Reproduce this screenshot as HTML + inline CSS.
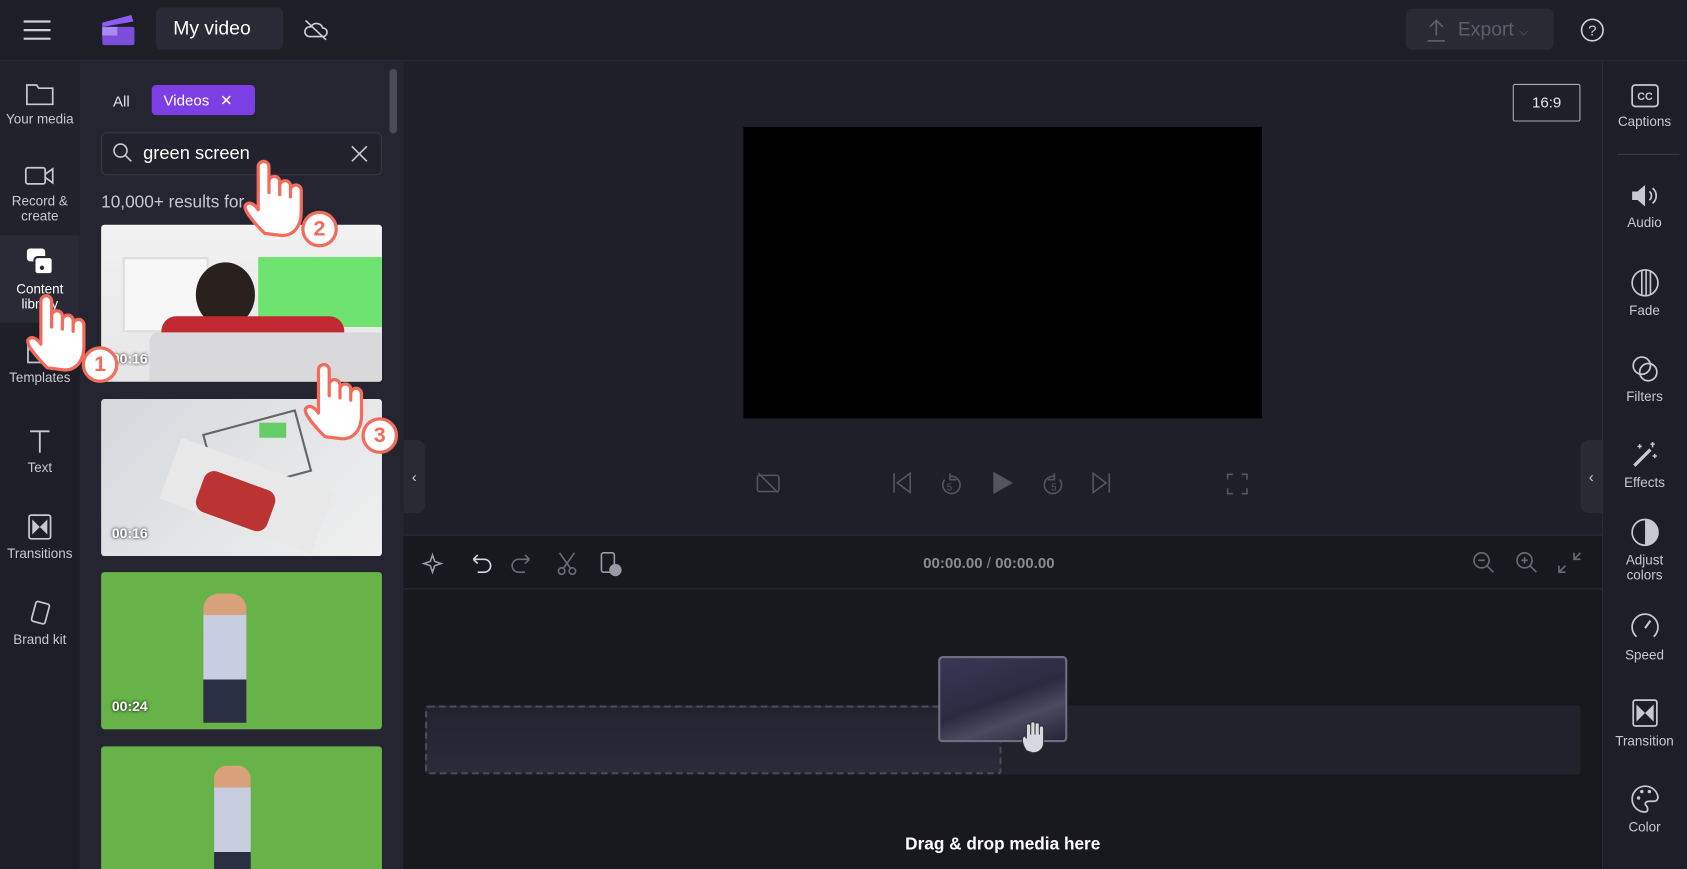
<!DOCTYPE html>
<html><head><meta charset="utf-8"><style>
*{box-sizing:border-box;margin:0;padding:0}
html,body{width:1687px;height:869px;overflow:hidden;background:#1c1c24;font-family:"Liberation Sans",sans-serif}
#w{width:1568px;height:808px;transform:scale(1.0759,1.0755);transform-origin:0 0;position:relative;background:#1f1f29;color:#e6e6ee}
.a{position:absolute}
.top{left:0;top:0;width:1568px;height:57px;background:#1e1e27;border-bottom:1px solid #2c2c38}
.rail{left:0;top:57px;width:74px;height:751px;background:#1e1e27}
.ri{position:absolute;left:0;width:74px;text-align:center;font-size:12.5px;color:#c8c8d2;line-height:14px}
.ri svg{display:block;margin:0 auto 6px}
.panel{left:74px;top:57px;width:301px;height:751px;background:#252531}
.thumb{position:absolute;left:94px;width:261px;height:146px;border-radius:3px;overflow:hidden}
.dur{position:absolute;left:10px;bottom:14px;font-size:13px;font-weight:bold;color:#fff;text-shadow:0 0 3px #000}
.rr{left:1489px;top:57px;width:79px;height:751px;background:#1e1e27;border-left:1px solid #2c2c38}
.rri{position:absolute;left:1489px;width:79px;text-align:center;font-size:12.5px;color:#c8c8d2;line-height:14px}
.rri svg{display:block;margin:0 auto 6px}
svg{overflow:visible}
.hand{position:absolute}
.num{position:absolute;width:34px;height:34px;border-radius:50%;background:#fff;border:3px solid #f26b5b;color:#f26b5b;font-weight:bold;font-size:20px;text-align:center;line-height:28px}
</style></head><body><div id="w">
<div class="a top"></div>
<svg class="a" style="left:22px;top:18px" width="26" height="20"><path d="M0 2H25M0 10H25M0 18H25" stroke="#cfcfd8" stroke-width="2"/></svg>
<svg class="a" style="left:94px;top:13px" width="32" height="30"><path d="M1 8L28 1 30 7 1 12Z" fill="#8b5cf6"/><rect x="1" y="12" width="30" height="17" rx="2" fill="#7c4ddb"/><rect x="1" y="12" width="14" height="8" fill="#a98af5"/></svg>
<div class="a" style="left:145px;top:7px;width:118px;height:39px;background:#2a2a36;border-radius:5px;font-size:18px;line-height:39px;padding-left:16px;color:#fff">My video</div>
<svg class="a" style="left:282px;top:17px" width="24" height="22"><path d="M5 17H18A4 4 0 0 0 18 9 6 6 0 0 0 7 8 4.5 4.5 0 0 0 5 17ZM2 2L21 20" stroke="#cfcfd8" stroke-width="1.5" fill="none"/></svg>
<div class="a" style="left:1307px;top:8px;width:137px;height:38px;background:#2a2a35;border-radius:5px;color:#5d5d6c;font-size:18px;line-height:38px;padding-left:48px">Export <span style="font-size:11px">⌵</span></div>
<svg class="a" style="left:1326px;top:17px" width="18" height="22"><path d="M9 16V2M3 8L9 2 15 8M1 21H17" stroke="#5d5d6c" stroke-width="1.6" fill="none"/></svg>
<svg class="a" style="left:1469px;top:17px" width="22" height="22"><circle cx="11" cy="11" r="10" stroke="#d0d0d8" stroke-width="1.5" fill="none"/><text x="11" y="16" font-size="14" fill="#d0d0d8" text-anchor="middle" font-family="Liberation Sans">?</text></svg>

<div class="a rail"></div>
<div class="a" style="left:0;top:57px;width:74px;height:162px;background:#22222c"></div>
<div class="a" style="left:0;top:219px;width:74px;height:81px;background:#2a2a36"></div>
<div class="ri" style="top:76px"><svg width="26" height="22"><path d="M1 3H10L12 6H25V21H1Z" stroke="#c8c8d2" stroke-width="1.6" fill="none"/></svg>Your media</div>
<div class="ri" style="top:152px"><svg width="28" height="22"><rect x="1" y="4" width="18" height="15" rx="2" stroke="#c8c8d2" stroke-width="1.6" fill="none"/><path d="M19 10L26 5V18L19 13" stroke="#c8c8d2" stroke-width="1.6" fill="none"/></svg>Record &amp;<br>create</div>
<div class="ri" style="top:230px;color:#fff"><svg width="26" height="26"><rect x="1" y="1" width="17" height="12" rx="3" fill="#fff"/><rect x="8" y="9" width="17" height="16" rx="3" fill="#fff" stroke="#2a2a36" stroke-width="2"/><circle cx="15" cy="19" r="2" fill="#2a2a36"/></svg>Content<br>library</div>
<div class="ri" style="top:316px"><svg width="24" height="22"><rect x="1" y="1" width="22" height="20" stroke="#c8c8d2" stroke-width="1.6" fill="none"/><path d="M1 9H23M12 9V21" stroke="#c8c8d2" stroke-width="1.6"/></svg>Templates</div>
<div class="ri" style="top:398px"><svg width="22" height="24"><path d="M2 3H20M11 3V23" stroke="#c8c8d2" stroke-width="1.7"/></svg>Text</div>
<div class="ri" style="top:478px"><svg width="22" height="24"><rect x="1" y="1" width="20" height="22" rx="2" stroke="#c8c8d2" stroke-width="1.6" fill="none"/><path d="M4 5L11 12 4 19ZM18 5L11 12 18 19Z" fill="#c8c8d2"/></svg>Transitions</div>
<div class="ri" style="top:558px"><svg width="22" height="24"><rect x="5" y="2" width="13" height="19" rx="2" transform="rotate(15 11 12)" stroke="#c8c8d2" stroke-width="1.6" fill="none"/></svg>Brand kit</div>

<div class="a panel"></div>
<div class="a" style="left:362px;top:64px;width:7px;height:60px;background:#4a4a58;border-radius:4px"></div>
<div class="a" style="left:105px;top:86px;font-size:14px;color:#e0e0e8">All</div>
<div class="a" style="left:141px;top:79px;width:96px;height:28px;background:#7b3fe4;border-radius:4px;color:#fff;font-size:14px;line-height:28px;padding-left:11px">Videos <span style="margin-left:6px">✕</span></div>
<div class="a" style="left:94px;top:123px;width:261px;height:40px;border:1px solid #393947;border-radius:5px;background:#22222c"></div>
<svg class="a" style="left:105px;top:133px" width="18" height="18"><circle cx="7" cy="7" r="6" stroke="#c8c8d2" stroke-width="1.5" fill="none"/><path d="M11.5 11.5L17 17" stroke="#c8c8d2" stroke-width="1.5"/></svg>
<div class="a" style="left:133px;top:133px;font-size:17px;color:#fff">green screen</div>
<svg class="a" style="left:326px;top:135px" width="16" height="16"><path d="M1 1L15 15M15 1L1 15" stroke="#c8c8d2" stroke-width="1.5"/></svg>
<div class="a" style="left:94px;top:180px;font-size:16px;color:#c8c8d2">10,000+ results for</div>

<div class="thumb" style="top:209px;background:linear-gradient(#f2f2f2,#e6e6e6)">
<div class="a" style="left:146px;top:30px;width:115px;height:65px;background:#6fe36f"></div>
<div class="a" style="left:20px;top:30px;width:80px;height:70px;border:2px solid #ddd;background:#f7f7f7"></div>
<div class="a" style="left:88px;top:35px;width:55px;height:60px;border-radius:50%;background:#2a211e"></div>
<div class="a" style="left:56px;top:85px;width:170px;height:35px;border-radius:14px;background:#c22a33"></div>
<div class="a" style="left:45px;top:100px;width:216px;height:46px;background:#d9d9dc;border-radius:8px 0 0 0"></div>
<div class="dur">00:16</div></div>
<div class="thumb" style="top:371px;background:linear-gradient(135deg,#d4d8dc,#f0f0f0)">
<div class="a" style="left:100px;top:20px;width:90px;height:60px;border:2px solid #666;transform:rotate(-15deg)"></div>
<div class="a" style="left:60px;top:60px;width:150px;height:60px;background:#e8e8e8;transform:rotate(20deg)"></div>
<div class="a" style="left:90px;top:75px;width:70px;height:40px;background:#b33;transform:rotate(20deg);border-radius:10px"></div>
<div class="a" style="left:147px;top:22px;width:25px;height:14px;background:#6c6"></div>
<div class="dur">00:16</div></div>
<div class="thumb" style="top:532px;background:#67b34a">
<div class="a" style="left:95px;top:20px;width:40px;height:120px;background:linear-gradient(#d9a27a 0 20px,#c8cedf 20px 80px,#2a2f44 80px);border-radius:14px 14px 0 0"></div>
<div class="dur">00:24</div></div>
<div class="thumb" style="top:694px;height:114px;border-radius:3px 3px 0 0;background:#67b34a">
<div class="a" style="left:105px;top:18px;width:34px;height:96px;background:linear-gradient(#d9a27a 0 20px,#c8cedf 20px 80px,#2a2f44 80px);border-radius:12px 12px 0 0"></div></div>

<!-- preview -->
<div class="a" style="left:1406px;top:78px;width:63px;height:35px;border:1px solid #aaaab4;border-radius:2px;font-size:14px;line-height:33px;text-align:center;color:#e6e6ee">16:9</div>
<div class="a" style="left:691px;top:118px;width:482px;height:271px;background:#000"></div>
<div class="a" style="left:375px;top:409px;width:20px;height:68px;background:#2a2a35;border-radius:0 8px 8px 0;color:#c8c8d2;font-size:14px;line-height:68px;text-align:center">‹</div>
<div class="a" style="left:1469px;top:409px;width:20px;height:68px;background:#2a2a35;border-radius:8px 0 0 8px;color:#c8c8d2;font-size:14px;line-height:68px;text-align:center">‹</div>
<svg class="a" style="left:703px;top:439px" width="22" height="20"><rect x="1" y="3" width="20" height="15" rx="2" stroke="#55555f" stroke-width="1.5" fill="none"/><path d="M2 1L20 19" stroke="#55555f" stroke-width="1.5"/></svg>
<svg class="a" style="left:828px;top:438px" width="200" height="24" fill="none" stroke="#55555f" stroke-width="1.5"><path d="M3 2V20M18 2L6 11 18 20Z"/><path d="M55 5A8 8 0 1 1 50 8M55 2V8H61"/><text x="52" y="18" font-size="9" fill="#55555f" stroke="none">5</text><path d="M96 2L112 11 96 20Z" fill="#55555f"/><path d="M152 5A8 8 0 1 0 157 8M152 2V8H146"/><text x="149" y="18" font-size="9" fill="#55555f" stroke="none">5</text><path d="M188 2L200 11 188 20ZM203 2V20"/></svg>
<svg class="a" style="left:1140px;top:440px" width="20" height="20" fill="none" stroke="#55555f" stroke-width="1.5"><path d="M1 6V1H6M14 1H19V6M19 14V19H14M6 19H1V14"/></svg>

<!-- timeline -->
<div class="a" style="left:375px;top:497px;width:1114px;height:311px;background:#18181f;border-top:1px solid #2c2c38"></div>
<div class="a" style="left:375px;top:547px;width:1114px;height:1px;background:#2c2c38"></div>
<svg class="a" style="left:394px;top:512px" width="190" height="24" fill="none" stroke="#9a9aa6" stroke-width="1.5"><path d="M8 4L10 10 16 12 10 14 8 20 6 14 0 12 6 10Z"/><path d="M46 8H56A6 6 0 0 1 56 20H50M46 8L50 4M46 8L50 12" stroke="#d8d8e0"/><path d="M98 8H88A6 6 0 0 0 88 20H94M98 8L94 4M98 8L94 12" stroke="#6a6a74"/><path d="M126 2L136 16M140 2L130 16" stroke="#6a6a74"/><circle cx="128" cy="19" r="3" stroke="#6a6a74"/><circle cx="138" cy="19" r="3" stroke="#6a6a74"/><rect x="165" y="2" width="12" height="18" rx="2"/><circle cx="178" cy="18" r="5" fill="#9a9aa6"/></svg>
<div class="a" style="left:858px;top:515px;font-size:14px;font-weight:bold;color:#8a8a96">00:00.00 <span style="font-weight:normal">/</span> 00:00.00</div>
<svg class="a" style="left:1369px;top:512px" width="102" height="24" fill="none" stroke="#6a6a74" stroke-width="1.5"><circle cx="8" cy="9" r="7"/><path d="M13 14L19 20M5 9H11"/><circle cx="48" cy="9" r="7"/><path d="M53 14L59 20M45 9H51M48 6V12"/><path d="M80 20L86 14M80 14V20H86M100 2L94 8M94 2V8H100"/></svg>

<div class="a" style="left:395px;top:656px;width:1074px;height:64px;background:#22222c;border-radius:3px"></div>
<div class="a" style="left:395px;top:656px;width:536px;height:64px;border:2px dashed #4a4a58;border-radius:3px;background:linear-gradient(to top,#2c2b3a,#232230)"></div>
<div class="a" style="left:872px;top:610px;width:120px;height:80px;border:2px solid #6e6e80;border-radius:4px;background:linear-gradient(160deg,#3a3858,#2a2a40 50%,#4a4a60 70%,#23233a)"></div>
<svg class="a" style="left:948px;top:670px" width="28" height="32"><path d="M6 28C2 22 1 16 4 14L6 16V5A2 2 0 0 1 10 5V13V3A2 2 0 0 1 14 3V13V4A2 2 0 0 1 18 4V13V7A2 2 0 0 1 22 7V20C22 26 18 30 12 30Z" fill="#d8d8e0" stroke="#333" stroke-width="1"/></svg>
<div class="a" style="left:375px;top:777px;width:1114px;text-align:center;font-size:16px;font-weight:bold;color:#fff">Drag &amp; drop media here</div>

<!-- right rail -->
<div class="a rr"></div>
<div class="a" style="left:1503px;top:143px;width:58px;height:1px;background:#3a3a46"></div>
<div class="rri" style="top:78px"><svg width="26" height="22"><rect x="1" y="1" width="24" height="20" rx="3" stroke="#c8c8d2" stroke-width="1.6" fill="none"/><text x="13" y="15" font-size="10" font-weight="bold" fill="#c8c8d2" text-anchor="middle" font-family="Liberation Sans">CC</text></svg>Captions</div>
<div class="rri" style="top:170px"><svg width="26" height="24"><path d="M1 8H6L13 2V22L6 16H1Z" fill="#c8c8d2"/><path d="M17 8A5 5 0 0 1 17 16M20 5A9 9 0 0 1 20 19" stroke="#c8c8d2" stroke-width="1.6" fill="none"/></svg>Audio</div>
<div class="rri" style="top:250px"><svg width="26" height="26"><circle cx="13" cy="13" r="12" stroke="#c8c8d2" stroke-width="1.6" fill="none"/><path d="M10 2V24M14 1V25M18 2V24" stroke="#c8c8d2" stroke-width="1.5"/></svg>Fade</div>
<div class="rri" style="top:330px"><svg width="26" height="26"><circle cx="10" cy="10" r="8" stroke="#c8c8d2" stroke-width="1.6" fill="none"/><circle cx="16" cy="16" r="8" stroke="#c8c8d2" stroke-width="1.6" fill="none"/></svg>Filters</div>
<div class="rri" style="top:410px"><svg width="26" height="26"><path d="M3 23L18 8" stroke="#c8c8d2" stroke-width="3"/><path d="M20 1V6M18 3H22M8 3V7M6 5H10M22 12V16M20 14H24" stroke="#c8c8d2" stroke-width="1.4"/></svg>Effects</div>
<div class="rri" style="top:482px"><svg width="26" height="26"><circle cx="13" cy="13" r="12" stroke="#c8c8d2" stroke-width="1.6" fill="none"/><path d="M13 1A12 12 0 0 1 13 25Z" fill="#c8c8d2"/></svg>Adjust<br>colors</div>
<div class="rri" style="top:570px"><svg width="26" height="26"><path d="M5 22A12 12 0 1 1 21 22" stroke="#c8c8d2" stroke-width="1.6" fill="none"/><path d="M13 14L18 7" stroke="#c8c8d2" stroke-width="2"/></svg>Speed</div>
<div class="rri" style="top:650px"><svg width="24" height="26"><rect x="1" y="1" width="22" height="24" rx="2" stroke="#c8c8d2" stroke-width="1.6" fill="none"/><path d="M4 5L12 13 4 21ZM20 5L12 13 20 21Z" fill="#c8c8d2"/></svg>Transition</div>
<div class="rri" style="top:730px"><svg width="26" height="26"><path d="M13 1A12 12 0 0 0 13 25C16 25 16 21 14 19 12 17 14 15 17 15H21C24 15 25 13 25 11 24 5 19 1 13 1Z" stroke="#c8c8d2" stroke-width="1.6" fill="none"/><circle cx="7" cy="12" r="1.6" fill="#c8c8d2"/><circle cx="10" cy="6" r="1.6" fill="#c8c8d2"/><circle cx="17" cy="6" r="1.6" fill="#c8c8d2"/></svg>Color</div>

<!-- hands -->
<svg class="hand" style="left:20px;top:270px" width="70" height="80"><path d="M24 72C14 62 4 50 6 46 9 42 14 44 18 50V10A5 5 0 0 1 28 10V34V24A5 5 0 0 1 38 24V36V28A5 5 0 0 1 48 28V38V32A5 5 0 0 1 58 32V52C58 64 52 74 40 74Z" fill="#fff" stroke="#f26b5b" stroke-width="3" stroke-linejoin="round"/></svg>
<div class="num" style="left:76px;top:322px">1</div>
<svg class="hand" style="left:222px;top:145px" width="70" height="80"><path d="M24 72C14 62 4 50 6 46 9 42 14 44 18 50V10A5 5 0 0 1 28 10V34V24A5 5 0 0 1 38 24V36V28A5 5 0 0 1 48 28V38V32A5 5 0 0 1 58 32V52C58 64 52 74 40 74Z" fill="#fff" stroke="#f26b5b" stroke-width="3" stroke-linejoin="round"/></svg>
<div class="num" style="left:280px;top:196px">2</div>
<svg class="hand" style="left:278px;top:334px" width="70" height="80"><path d="M24 72C14 62 4 50 6 46 9 42 14 44 18 50V10A5 5 0 0 1 28 10V34V24A5 5 0 0 1 38 24V36V28A5 5 0 0 1 48 28V38V32A5 5 0 0 1 58 32V52C58 64 52 74 40 74Z" fill="#fff" stroke="#f26b5b" stroke-width="3" stroke-linejoin="round"/></svg>
<div class="num" style="left:336px;top:388px">3</div>
</div></body></html>
